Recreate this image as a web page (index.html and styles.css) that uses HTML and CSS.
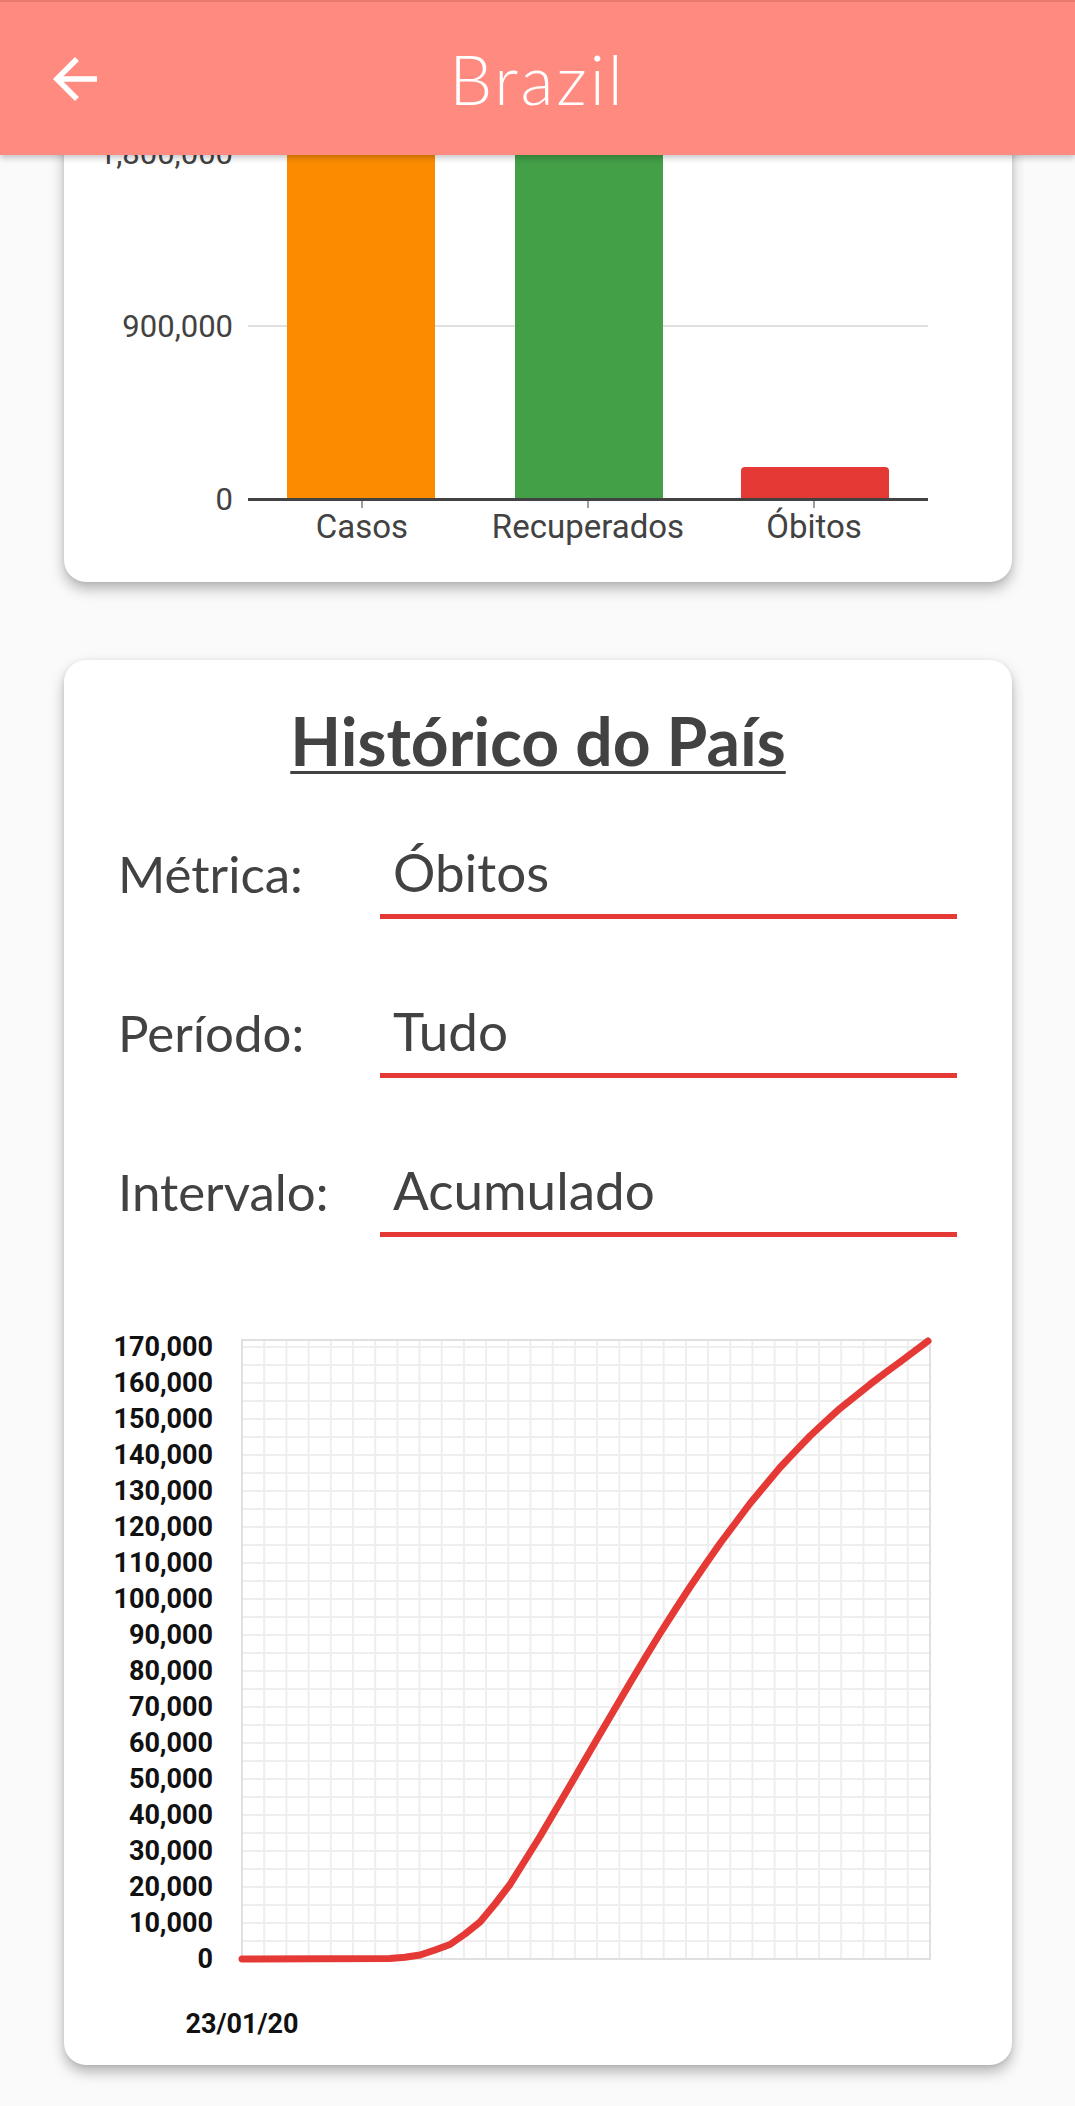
FILE: index.html
```html
<!DOCTYPE html>
<html lang="pt-BR">
<head>
<meta charset="utf-8">
<title>Brazil</title>
<link rel="stylesheet" href="styles.css">
</head>
<body>
<header class="appbar">
  <button class="back" aria-label="Voltar">
    <svg viewBox="0 0 24 24"><path d="M20 11H7.83l5.59-5.59L12 4l-8 8 8 8 1.41-1.41L7.83 13H20v-2z"/></svg>
  </button>
  <h1 class="appbar-title">Brazil</h1>
  <span class="appbar-spacer"></span>
</header>

<main class="content">
  <section class="card card-summary">
    <svg class="bar-chart" viewBox="0 0 948 560" width="948" height="560">
      <g class="grid">
        <line x1="184" y1="153" x2="864" y2="153"/>
        <line x1="184" y1="326" x2="864" y2="326"/>
      </g>
      <rect class="bar-casos" x="223" y="0" width="148" height="499"/>
      <rect class="bar-recuperados" x="451" y="0" width="148" height="499"/>
      <path class="bar-obitos" d="M677 499V471a4 4 0 0 1 4-4h140a4 4 0 0 1 4 4v28z"/>
      <line class="axis" x1="184" y1="499.5" x2="864" y2="499.5"/>
      <g class="ticks">
        <line x1="298" y1="501" x2="298" y2="508"/>
        <line x1="524" y1="501" x2="524" y2="508"/>
        <line x1="750" y1="501" x2="750" y2="508"/>
      </g>
      <g class="bar-ylabels">
        <text x="169" y="164">1,800,000</text>
        <text x="169" y="337">900,000</text>
        <text x="169" y="510">0</text>
      </g>
      <g class="bar-xlabels">
        <text x="298" y="538">Casos</text>
        <text x="524" y="538">Recuperados</text>
        <text x="750" y="538">Óbitos</text>
      </g>
    </svg>
  </section>

  <section class="card card-history">
    <h2 class="history-title">Histórico do País</h2>
    <div class="filters">
      <div class="filter-row">
        <span class="filter-label">Métrica:</span>
        <div class="filter-field">Óbitos</div>
      </div>
      <div class="filter-row">
        <span class="filter-label">Período:</span>
        <div class="filter-field">Tudo</div>
      </div>
      <div class="filter-row">
        <span class="filter-label">Intervalo:</span>
        <div class="filter-field">Acumulado</div>
      </div>
    </div>

    <svg class="line-chart" viewBox="0 0 948 750" width="948" height="750">
      <path class="minor-grid" d="M200.2 41V660M222.4 41V660M244.6 41V660M266.8 41V660M289 41V660M311.2 41V660M333.4 41V660M355.5 41V660M377.7 41V660M399.9 41V660M422.1 41V660M444.3 41V660M466.5 41V660M488.7 41V660M510.9 41V660M533.1 41V660M555.3 41V660M577.5 41V660M599.7 41V660M621.9 41V660M644.1 41V660M666.3 41V660M688.5 41V660M710.6 41V660M732.8 41V660M755 41V660M777.2 41V660M799.4 41V660M821.6 41V660M843.8 41V660M178 642H866M178 624H866M178 606H866M178 588H866M178 570H866M178 552H866M178 534H866M178 516H866M178 498H866M178 480H866M178 462H866M178 444H866M178 426H866M178 408H866M178 390H866M178 372H866M178 354H866M178 336H866M178 318H866M178 300H866M178 282H866M178 264H866M178 246H866M178 228H866M178 210H866M178 192H866M178 174H866M178 156H866M178 138H866M178 120H866M178 102H866M178 84H866M178 66H866M178 48H866"/>
      <rect class="plot-border" x="178" y="41" width="688" height="619"/>
      <g class="line-ylabels">
        <text x="149" y="57">170,000</text>
        <text x="149" y="93">160,000</text>
        <text x="149" y="129">150,000</text>
        <text x="149" y="165">140,000</text>
        <text x="149" y="201">130,000</text>
        <text x="149" y="237">120,000</text>
        <text x="149" y="273">110,000</text>
        <text x="149" y="309">100,000</text>
        <text x="149" y="345">90,000</text>
        <text x="149" y="381">80,000</text>
        <text x="149" y="417">70,000</text>
        <text x="149" y="453">60,000</text>
        <text x="149" y="489">50,000</text>
        <text x="149" y="525">40,000</text>
        <text x="149" y="561">30,000</text>
        <text x="149" y="597">20,000</text>
        <text x="149" y="633">10,000</text>
        <text x="149" y="669">0</text>
      </g>
      <text class="line-xlabel" x="178" y="734">23/01/20</text>
      <polyline class="series" points="178,660 326,659.5 341,658.3 356,656 371,651 386,645.5 401,635 416,623 431,605 446,585.5 461,561.5 476,537.5 491,512 506,486.5 521,460.7 536,435 551,409.5 566,384 581,359 596,334.5 611,311 626,288 641,266 656,244.5 671,224.5 686,204.5 701,186.5 716,168.5 731,152.7 746,137 761,123 776,109.4 791,97.4 806,85.4 821,74 836,63 850,52.5 864,42"/>
    </svg>
  </section>
</main>
</body>
</html>
```

FILE: styles.css
```css
* {
  box-sizing: border-box;
}

html,
body {
  margin: 0;
  background: #fafafa;
  color: #424242;
  font-family: "Lato", "Open Sans", sans-serif;
}

.appbar {
  position: fixed;
  top: 0;
  left: 0;
  right: 0;
  z-index: 10;
  height: 155px;
  padding: 0 42px;
  display: grid;
  grid-template-columns: 66px 1fr 66px;
  align-items: center;
  background: #ff8a80;
  border-top: 2px solid #e9786f;
  box-shadow: 0 3px 6px rgba(0, 0, 0, 0.22);
}

.back {
  width: 66px;
  height: 66px;
  padding: 0;
  border: 0;
  background: none;
}

.back svg {
  display: block;
  width: 66px;
  height: 66px;
  fill: #fff;
}

.appbar-title {
  margin: 0;
  text-align: center;
  color: #fff;
  font-family: "Lato", sans-serif;
  font-weight: 300;
  font-size: 68px;
  letter-spacing: 3px;
  line-height: 1;
}

.content {
  display: flex;
  flex-direction: column;
  gap: 78px;
  padding: 0 63px 41px 64px;
}

.card {
  background: #fff;
  border-radius: 22px;
  box-shadow: 0 7px 14px rgba(0, 0, 0, 0.28), 0 1px 4px rgba(0, 0, 0, 0.08);
}

.card-summary {
  height: 582px;
  padding-bottom: 22px;
  overflow: hidden;
}

.bar-chart {
  display: block;
}

.bar-chart .grid line {
  stroke: #e0e0e0;
  stroke-width: 2;
}

.bar-casos {
  fill: #fb8c00;
}

.bar-recuperados {
  fill: #43a047;
}

.bar-obitos {
  fill: #e53935;
}

.bar-chart .axis {
  stroke: #424242;
  stroke-width: 3;
}

.bar-chart .ticks line {
  stroke: #9e9e9e;
  stroke-width: 2;
}

.bar-ylabels text,
.bar-xlabels text {
  font-family: "Roboto", sans-serif;
  fill: #424242;
}

.bar-ylabels text {
  font-size: 31px;
  text-anchor: end;
}

.bar-xlabels text {
  font-size: 33px;
  text-anchor: middle;
}

.card-history {
  padding: 41px 0 16px;
}

.history-title {
  margin: 0;
  text-align: center;
  font-weight: 700;
  font-size: 66px;
  line-height: 80px;
  color: #424242;
  text-decoration: underline;
  text-decoration-thickness: 3px;
  text-underline-offset: 5px;
}

.filters {
  display: flex;
  flex-direction: column;
  gap: 80px;
  margin-top: 59px;
  padding: 0 55px 0 54px;
}

.filter-row {
  display: grid;
  grid-template-columns: 262px 1fr;
  align-items: start;
}

.filter-label {
  padding-top: 2px;
  font-size: 51px;
  line-height: 64px;
}

.filter-field {
  padding: 0 0 10px 13px;
  font-size: 53px;
  line-height: 64px;
  border-bottom: 5px solid #e53935;
}

.line-chart {
  display: block;
  margin-top: 62px;
}

.minor-grid {
  fill: none;
  stroke: #eeeeee;
  stroke-width: 2;
}

.plot-border {
  fill: none;
  stroke: #e0e0e0;
  stroke-width: 2;
}

.line-ylabels text,
.line-xlabel {
  font-family: "Roboto", sans-serif;
  font-weight: 700;
  font-size: 27px;
  fill: #111;
}

.line-ylabels text {
  text-anchor: end;
}

.line-xlabel {
  text-anchor: middle;
}

.series {
  fill: none;
  stroke: #e53935;
  stroke-width: 7;
  stroke-linecap: round;
  stroke-linejoin: round;
}
```
